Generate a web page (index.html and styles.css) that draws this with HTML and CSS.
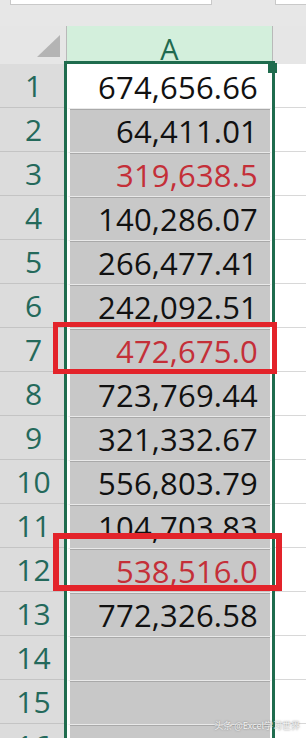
FILE: index.html
```html
<!DOCTYPE html>
<html>
<head>
<meta charset="utf-8">
<link rel="stylesheet" href="styles.css">
</head>
<body>
<div class="screen">
  <div class="topbar">
    <div class="box box-left"></div>
    <div class="box box-right"></div>
  </div>
  <div class="sheet">
    <div class="rowheads">
      <div class="corner"><span class="tri"></span></div>
      <div class="rh">1</div>
      <div class="rh">2</div>
      <div class="rh">3</div>
      <div class="rh">4</div>
      <div class="rh">5</div>
      <div class="rh">6</div>
      <div class="rh">7</div>
      <div class="rh">8</div>
      <div class="rh">9</div>
      <div class="rh">10</div>
      <div class="rh">11</div>
      <div class="rh">12</div>
      <div class="rh">13</div>
      <div class="rh">14</div>
      <div class="rh">15</div>
      <div class="rh">16</div>
    </div>
    <div class="colA">
      <div class="colhead">A</div>
      <div class="sel">
        <div class="cell active">674,656.66</div>
        <div class="cell">64,411.01</div>
        <div class="cell red">319,638.5</div>
        <div class="cell">140,286.07</div>
        <div class="cell">266,477.41</div>
        <div class="cell">242,092.51</div>
        <div class="cell red">472,675.0</div>
        <div class="cell">723,769.44</div>
        <div class="cell">321,332.67</div>
        <div class="cell">556,803.79</div>
        <div class="cell">104,703.83</div>
        <div class="cell red">538,516.0</div>
        <div class="cell">772,326.58</div>
        <div class="cell"></div>
        <div class="cell"></div>
        <div class="cell"></div>
        <span class="handle"></span>
      </div>
    </div>
    <div class="rest">
      <div class="resthead"></div>
      <div class="rr"></div><div class="rr"></div><div class="rr"></div><div class="rr"></div>
      <div class="rr"></div><div class="rr"></div><div class="rr"></div><div class="rr"></div>
      <div class="rr"></div><div class="rr"></div><div class="rr"></div><div class="rr"></div>
      <div class="rr"></div><div class="rr"></div><div class="rr"></div><div class="rr"></div>
    </div>
    <div class="mark mark7"></div>
    <div class="mark mark12"></div>
  </div>
  <div class="watermark">头条 @Excel学习世界</div>
</div>
</body>
</html>
```
FILE: styles.css
```css
* { box-sizing: border-box; }
html, body { margin: 0; padding: 0; }
body {
  width: 306px;
  height: 738px;
  overflow: hidden;
  background: #e6e6e6;
  font-family: "Open Sans", "Noto Sans", sans-serif;
}
.screen {
  position: relative;
  width: 306px;
  height: 738px;
  overflow: hidden;
}
.topbar {
  height: 26px;
  display: flex;
  align-items: flex-start;
  background: #e7e7e7;
}
.box {
  height: 5px;
  background: #ffffff;
  border: 1px solid #c9c9c9;
  border-top: none;
}
.box-left { margin-left: 10px; width: 202px; }
.box-right { margin-left: 63px; flex: 1; border-right: none; }

.sheet {
  position: relative;
  display: flex;
  height: 712px;
  overflow: hidden;
}
.rowheads {
  width: 64px;
  flex: none;
  display: flex;
  flex-direction: column;
  background: #dcdcdc;
}
.corner {
  height: 38px;
  flex: none;
  background: #e6e6e6;
  display: flex;
  justify-content: flex-end;
  align-items: flex-end;
  padding: 0 4px 7px 0;
}
.tri {
  width: 23px;
  height: 22px;
  background: #b4b4b4;
  clip-path: polygon(100% 0, 100% 100%, 0 100%);
}
.rh {
  height: 44px;
  flex: none;
  border-bottom: 1px solid #c4c4c4;
  display: flex;
  align-items: center;
  justify-content: center;
  font-size: 30px;
  color: #24695b;
  padding-left: 3px;
}
.colA {
  width: 211px;
  flex: none;
  display: flex;
  flex-direction: column;
}
.colhead {
  height: 35px;
  flex: none;
  margin: 0 2px;
  background: #d3efdc;
  border-left: 1px solid #b9b9b9;
  border-right: 1px solid #b9b9b9;
  display: flex;
  align-items: center;
  justify-content: center;
  padding-top: 9px;
  font-size: 29px;
  color: #1f6a4f;
}
.sel {
  position: relative;
  flex: 1;
  background: #ffffff;
  border: 3px solid #1f6c4e;
  border-bottom: none;
  display: flex;
  flex-direction: column;
}
.cell {
  height: 44px;
  flex: none;
  background: #c8c8c8;
  border-left: 3px solid #ffffff;
  border-right: 2px solid #ffffff;
  border-top: 1px solid #e9e9e9;
  box-shadow: inset 0 1px 0 #a9a9a9;
  display: flex;
  align-items: center;
  justify-content: flex-end;
  padding-right: 12px;
  font-size: 31px;
  letter-spacing: 0.2px;
  color: #111111;
}
.cell.active {
  background: #ffffff;
  box-shadow: none;
  border-top-color: #ffffff;
}
.cell.red { color: #c42f38; }
.handle {
  position: absolute;
  top: -1px;
  right: -5px;
  width: 9px;
  height: 10px;
  background: #1f6c4e;
}
.rest {
  flex: 1;
  display: flex;
  flex-direction: column;
  background: #ffffff;
}
.resthead {
  height: 38px;
  flex: none;
  background: #e6e6e6;
}
.rr {
  height: 44px;
  flex: none;
  border-bottom: 1px solid #d8d8d8;
}
.mark {
  position: absolute;
  border-style: solid;
  border-color: #e3232a;
}
.mark7 {
  left: 53px;
  top: 296px;
  width: 224px;
  height: 52px;
  border-width: 5px;
}
.mark12 {
  left: 53px;
  top: 507px;
  width: 229px;
  height: 58px;
  border-width: 6px;
}
.watermark {
  position: absolute;
  right: 6px;
  bottom: 6px;
  font-family: "Noto Sans CJK SC", sans-serif;
  font-size: 9px;
  color: #f2f2f2;
  text-shadow: 0 0 2px #6e6e6e;
}
```
